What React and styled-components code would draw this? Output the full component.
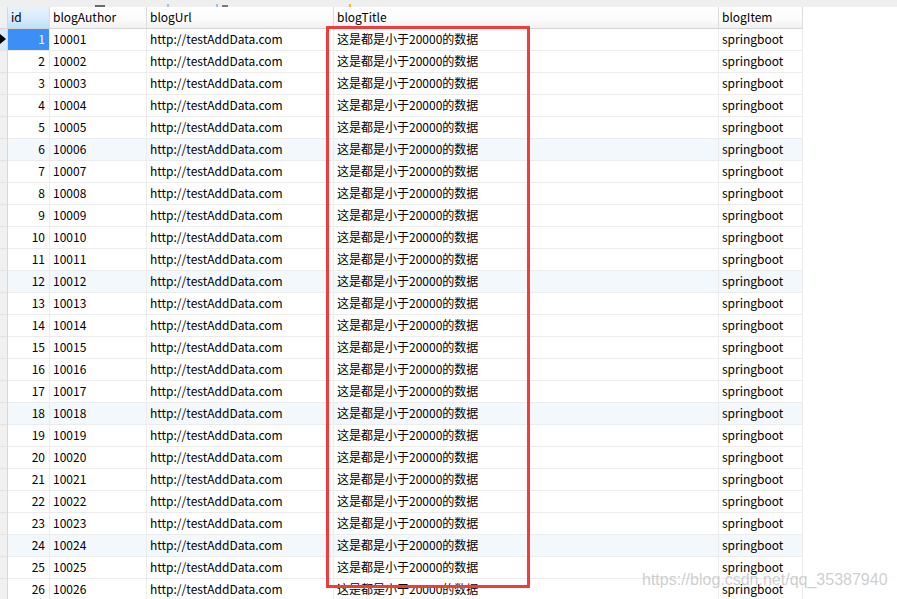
import React from 'react';
import styled, { createGlobalStyle } from 'styled-components';

const GlobalStyle = createGlobalStyle`
  html, body {
    margin: 0;
    padding: 0;
    background: #ffffff;
    overflow: hidden;
  }
  body {
    font-family: "Noto Sans CJK SC", "Noto Sans", sans-serif;
  }
`;

const COLUMNS = '8px 42px 97px 187px 385px 84px';

const Page = styled.div`
  position: relative;
  width: 897px;
  height: 599px;
  background: #ffffff;
`;

const TopStrip = styled.div`
  height: 7px;
  background: #efefef;
  display: flex;
  align-items: flex-end;
`;

const StripMark = styled.span`
  display: block;
  margin-left: ${p => p.left}px;
  width: ${p => p.w}px;
  height: ${p => p.h || 3}px;
  background: ${p => p.color};
`;

const Grid = styled.div`
  width: 803px;
  font-size: 12px;
  color: #000000;
`;

const Row = styled.div`
  display: grid;
  grid-template-columns: ${COLUMNS};
  height: 22px;
  background: ${p => (p.tinted ? '#f3f8fd' : '#ffffff')};
`;

const HeadCell = styled.div`
  box-sizing: border-box;
  display: flex;
  align-items: center;
  padding: 0 0 1px 3px;
  line-height: 16px;
  white-space: nowrap;
  overflow: hidden;
  border-right: 1px solid #dcdcdc;
  border-bottom: 1px solid #d5d5d5;
  background: ${p =>
    p.active
      ? 'linear-gradient(#e8f3fd, #d7ebfb 55%, #bde0f8)'
      : 'linear-gradient(#ffffff, #fbfbfb 60%, #f1f1f1)'};
`;

const Indicator = styled.div`
  box-sizing: border-box;
  position: relative;
  border-right: 1px solid #d8d8d8;
  border-bottom: 1px solid ${p => (p.head ? '#d5d5d5' : '#e2e2e2')};
  background: ${p => (p.current ? '#d6eafb' : '#f0f0f0')};
`;

const Arrow = styled.span`
  position: absolute;
  left: 0;
  top: 5px;
  width: 0;
  height: 0;
  border-top: 5px solid transparent;
  border-bottom: 5px solid transparent;
  border-left: 6px solid #000000;
`;

const Cell = styled.div`
  box-sizing: border-box;
  display: flex;
  align-items: center;
  justify-content: ${p => (p.num ? 'flex-end' : 'flex-start')};
  padding: ${p => (p.num ? '0 4px 1px 0' : '0 0 1px 3px')};
  line-height: 16px;
  white-space: nowrap;
  overflow: hidden;
  border-right: 1px solid #ececec;
  border-bottom: 1px solid #ececec;
  ${p => p.selected && 'background: #3b8ff7; color: #ffffff;'}
`;

const Highlight = styled.div`
  position: absolute;
  left: 326px;
  top: 26px;
  width: 198px;
  height: 556px;
  border: 3px solid #f23b3b;
  pointer-events: none;
`;

const Watermark = styled.div`
  position: absolute;
  left: 642px;
  top: 571px;
  font-family: "Liberation Sans", Arial, sans-serif;
  font-size: 16px;
  line-height: 18px;
  color: rgba(190, 190, 190, 0.75);
  pointer-events: none;
  white-space: nowrap;
`;

const rows = Array.from({ length: 26 }, (_, i) => ({
  id: i + 1,
  blogAuthor: String(10001 + i),
  blogUrl: 'http://testAddData.com',
  blogTitle: '这是都是小于20000的数据',
  blogItem: 'springboot',
}));

const App = () => (
  <Page>
    <GlobalStyle />
    <TopStrip>
      <StripMark left={95} w={10} h={2} color="#6a6a6a" />
      <StripMark left={62} w={2} h={3} color="#9cc3ea" />
      <StripMark left={47} w={2} h={3} color="#9cc3ea" />
      <StripMark left={4} w={6} h={2} color="#7a7a7a" />
      <StripMark left={121} w={2} h={3} color="#f5b042" />
    </TopStrip>
    <Grid>
      <Row>
        <Indicator head />
        <HeadCell active>id</HeadCell>
        <HeadCell>blogAuthor</HeadCell>
        <HeadCell>blogUrl</HeadCell>
        <HeadCell>blogTitle</HeadCell>
        <HeadCell>blogItem</HeadCell>
      </Row>
      {rows.map(row => (
        <Row key={row.id} tinted={row.id % 6 === 0}>
          <Indicator current={row.id === 1}>
            {row.id === 1 && <Arrow />}
          </Indicator>
          <Cell num selected={row.id === 1}>
            {row.id}
          </Cell>
          <Cell>{row.blogAuthor}</Cell>
          <Cell>{row.blogUrl}</Cell>
          <Cell>{row.blogTitle}</Cell>
          <Cell>{row.blogItem}</Cell>
        </Row>
      ))}
    </Grid>
    <Highlight />
    <Watermark>https://blog.csdn.net/qq_35387940</Watermark>
  </Page>
);

export default App;
